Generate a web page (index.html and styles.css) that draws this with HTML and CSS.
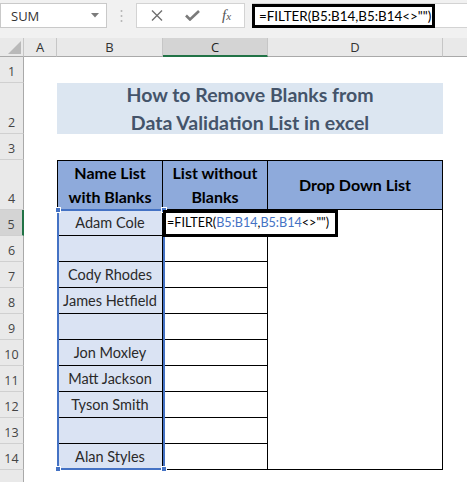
FILE: index.html
```html
<!DOCTYPE html>
<html>
<head>
<meta charset="utf-8">
<link rel="stylesheet" href="styles.css">
</head>
<body>
<div class="app">
  <div class="toolbar">
    <div class="namebox">
      <span class="nb-text">SUM</span>
      <svg class="nb-arrow" width="8" height="5" viewBox="0 0 8 5"><path d="M0 0 L8 0 L4 4.5 Z" fill="#7b7b7b"/></svg>
    </div>
    <div class="dots">
      <svg width="3" height="14" viewBox="0 0 3 14"><circle cx="1.5" cy="2" r="1" fill="#b5b5b5"/><circle cx="1.5" cy="7" r="1" fill="#b5b5b5"/><circle cx="1.5" cy="12" r="1" fill="#b5b5b5"/></svg>
    </div>
    <div class="fxbox">
      <svg class="ic-x" width="12" height="11" viewBox="0 0 12 11"><path d="M1 0.5 L11 10.5 M11 0.5 L1 10.5" stroke="#707070" stroke-width="1.4" fill="none"/></svg>
      <svg class="ic-check" width="15" height="11" viewBox="0 0 15 11"><path d="M1 5.5 L5 9.5 L14 1" stroke="#7a7a7a" stroke-width="2.6" fill="none"/></svg>
      <span class="fx">f<span class="fx-x">x</span></span>
    </div>
    <div class="formula-field">
      <div class="formula">=FILTER(B5:B14,B5:B14&lt;&gt;"")</div>
    </div>
  </div>

  <div class="sheet">
    <div class="corner"><svg width="24" height="19" viewBox="0 0 24 19"><path d="M8 16 L21 16 L21 3 Z" fill="#b9b9b9"/></svg></div>
    <div class="ch">A</div>
    <div class="ch">B</div>
    <div class="ch ch-sel">C</div>
    <div class="ch">D</div>
    <div class="ch ch-last"></div>

    <div class="rh">1</div><div class="c"></div><div class="c"></div><div class="c"></div><div class="c"></div><div class="c"></div>

    <div class="rh">2</div><div class="c"></div>
    <div class="title">How to Remove Blanks from<br>Data Validation List in excel</div>
    <div class="c"></div>

    <div class="rh">3</div><div class="c"></div><div class="c"></div><div class="c"></div><div class="c"></div><div class="c"></div>

    <div class="rh">4</div><div class="c"></div>
    <div class="th th-first">Name List<br>with Blanks</div>
    <div class="th">List without<br>Blanks</div>
    <div class="th th-mid">Drop Down List</div>
    <div class="c"></div>

    <div class="rh rh-sel">5</div><div class="c"></div>
    <div class="b b-first">Adam Cole
      <div class="sel">
        <span class="hd hd-tl"></span><span class="hd hd-tr"></span><span class="hd hd-bl"></span><span class="hd hd-br"></span>
      </div>
    </div>
    <div class="cc cc-first">
      <div class="edit">=FILTER(<span class="ref">B5:B14</span>,<span class="ref">B5:B14</span>&lt;&gt;"")</div>
    </div>
    <div class="dm"></div>
    <div class="c"></div>

    <div class="rh">6</div><div class="c"></div><div class="b"></div><div class="cc"></div><div class="c"></div>
    <div class="rh">7</div><div class="c"></div><div class="b">Cody Rhodes</div><div class="cc"></div><div class="c"></div>
    <div class="rh">8</div><div class="c"></div><div class="b">James Hetfield</div><div class="cc"></div><div class="c"></div>
    <div class="rh">9</div><div class="c"></div><div class="b"></div><div class="cc"></div><div class="c"></div>
    <div class="rh">10</div><div class="c"></div><div class="b">Jon Moxley</div><div class="cc"></div><div class="c"></div>
    <div class="rh">11</div><div class="c"></div><div class="b">Matt Jackson</div><div class="cc"></div><div class="c"></div>
    <div class="rh">12</div><div class="c"></div><div class="b">Tyson Smith</div><div class="cc"></div><div class="c"></div>
    <div class="rh">13</div><div class="c"></div><div class="b"></div><div class="cc"></div><div class="c"></div>
    <div class="rh">14</div><div class="c"></div><div class="b">Alan Styles</div><div class="cc"></div><div class="c"></div>

    <div class="rh"></div><div class="c"></div><div class="c"></div><div class="c"></div><div class="c"></div><div class="c"></div>
  </div>
</div>
</body>
</html>
```

FILE: styles.css
```css
* { box-sizing: border-box; }
html, body { margin: 0; padding: 0; }
body {
  width: 467px;
  height: 482px;
  overflow: hidden;
  background: #ffffff;
  font-family: "Lato", "Noto Sans", sans-serif;
}
.app { width: 467px; }

/* ---------- formula bar ---------- */
.toolbar {
  height: 38px;
  background: #f1f1f1;
  display: flex;
  align-items: flex-start;
  padding-top: 3px;
}
.namebox {
  width: 107px;
  height: 25px;
  background: #fff;
  border: 1px solid #c9c9c9;
  display: flex;
  align-items: center;
  justify-content: space-between;
  padding: 0 7px 0 10px;
}
.nb-text {
  font-family: "Open Sans", "Noto Sans", sans-serif;
  font-size: 13px;
  color: #333;
}
.dots {
  width: 29px;
  height: 25px;
  display: flex;
  align-items: center;
  justify-content: center;
}
.fxbox {
  width: 109px;
  height: 25px;
  background: #fff;
  border: 1px solid #d3d3d3;
  display: flex;
  align-items: center;
  padding-left: 14px;
}
.ic-x { margin-right: 22px; }
.ic-check { margin-right: 22px; }
.fx {
  font-family: "Liberation Serif", "DejaVu Serif", serif;
  font-style: italic;
  font-size: 15px;
  color: #555;
  line-height: 1;
}
.fx-x { font-size: 11px; }
.formula-field {
  flex: 1;
  margin-left: 7px;
  height: 25px;
  background: #fff;
  border: 1px solid #d3d3d3;
  border-right: none;
  position: relative;
}
.formula {
  position: absolute;
  left: -1px;
  top: 0;
  width: 183px;
  height: 24px;
  border: 3px solid #000;
  font-size: 13.4px;
  line-height: 18px;
  padding-left: 4px;
  color: #000;
  white-space: nowrap;
}

/* ---------- sheet grid ---------- */
.sheet {
  display: grid;
  grid-template-columns: 24px 33px 106px 105px 175px 1fr;
  grid-template-rows: 19px 26px 51px 26px 50px repeat(11, 26px);
}
.corner {
  background: #e9e9e9;
  border-right: 1px solid #c6c6c6;
  border-bottom: 1px solid #a9a9a9;
}
.corner svg { display: block; }
.ch {
  background: #e9e9e9;
  border-right: 1px solid #c6c6c6;
  border-bottom: 1px solid #a9a9a9;
  font-family: "Open Sans", "Noto Sans", sans-serif;
  font-size: 13px;
  color: #333;
  display: flex;
  align-items: center;
  justify-content: center;
}
.ch-last { border-right: none; }
.ch-sel {
  background: #d4d4d4;
  border-bottom: 2px solid #217346;
  color: #222;
}
.rh {
  background: #e9e9e9;
  border-right: 1px solid #a9a9a9;
  border-bottom: 1px solid #d0d0d0;
  font-family: "Open Sans", "Noto Sans", sans-serif;
  font-size: 12.5px;
  color: #444;
  display: flex;
  align-items: flex-end;
  justify-content: center;
  padding-bottom: 2px;
  line-height: 17px;
}
.rh-sel {
  background: #d4d4d4;
  border-right: 2px solid #217346;
}
.c { background: #fff; }

.title {
  grid-column: span 3;
  background: #dce6f1;
  color: #44546a;
  font-weight: bold;
  font-size: 19.5px;
  line-height: 28px;
  text-align: center;
  display: flex;
  align-items: center;
  justify-content: center;
  padding-top: 1px;
}

.th {
  background: #8eaadb;
  border-top: 1px solid #000;
  border-right: 1px solid #000;
  border-bottom: 1px solid #000;
  font-weight: bold;
  font-size: 16px;
  line-height: 24px;
  color: #000;
  text-align: center;
  display: flex;
  align-items: center;
  justify-content: center;
}
.th-first { border-left: 1px solid #000; }

.b {
  position: relative;
  background: #dae3f3;
  border-left: 1px solid #000;
  border-right: 1px solid #000;
  border-bottom: 1px solid #000;
  font-size: 14.5px;
  color: #2a2a2a;
  display: flex;
  align-items: flex-end;
  justify-content: center;
  padding-bottom: 3px;
  line-height: 19px;
  white-space: nowrap;
}
.cc {
  position: relative;
  background: #fff;
  border-right: 1px solid #000;
  border-bottom: 1px solid #000;
}
.dm {
  grid-row: span 10;
  background: #fff;
  border-right: 1px solid #000;
  border-bottom: 1px solid #000;
}

/* selection overlay B5:B14 */
.sel {
  position: absolute;
  left: -1px;
  top: -1px;
  width: 108px;
  height: 261px;
  border: 2px solid #4472c4;
  z-index: 3;
}
.hd {
  position: absolute;
  width: 6px;
  height: 6px;
  background: #4472c4;
  border: 1px solid #fff;
}
.hd-tl { left: -4px; top: -4px; }
.hd-tr { right: -4px; top: -4px; }
.hd-bl { left: -4px; bottom: -4px; }
.hd-br { right: -4px; bottom: -4px; }

/* formula edit overlay in C5 */
.edit {
  position: absolute;
  left: 0;
  top: 0;
  width: 175px;
  height: 27px;
  background: #fff;
  border: 3px solid #000;
  font-size: 12.6px;
  line-height: 19px;
  padding-left: 1px;
  color: #000;
  white-space: nowrap;
  z-index: 4;
}
.ref { color: #4472c4; }
```
